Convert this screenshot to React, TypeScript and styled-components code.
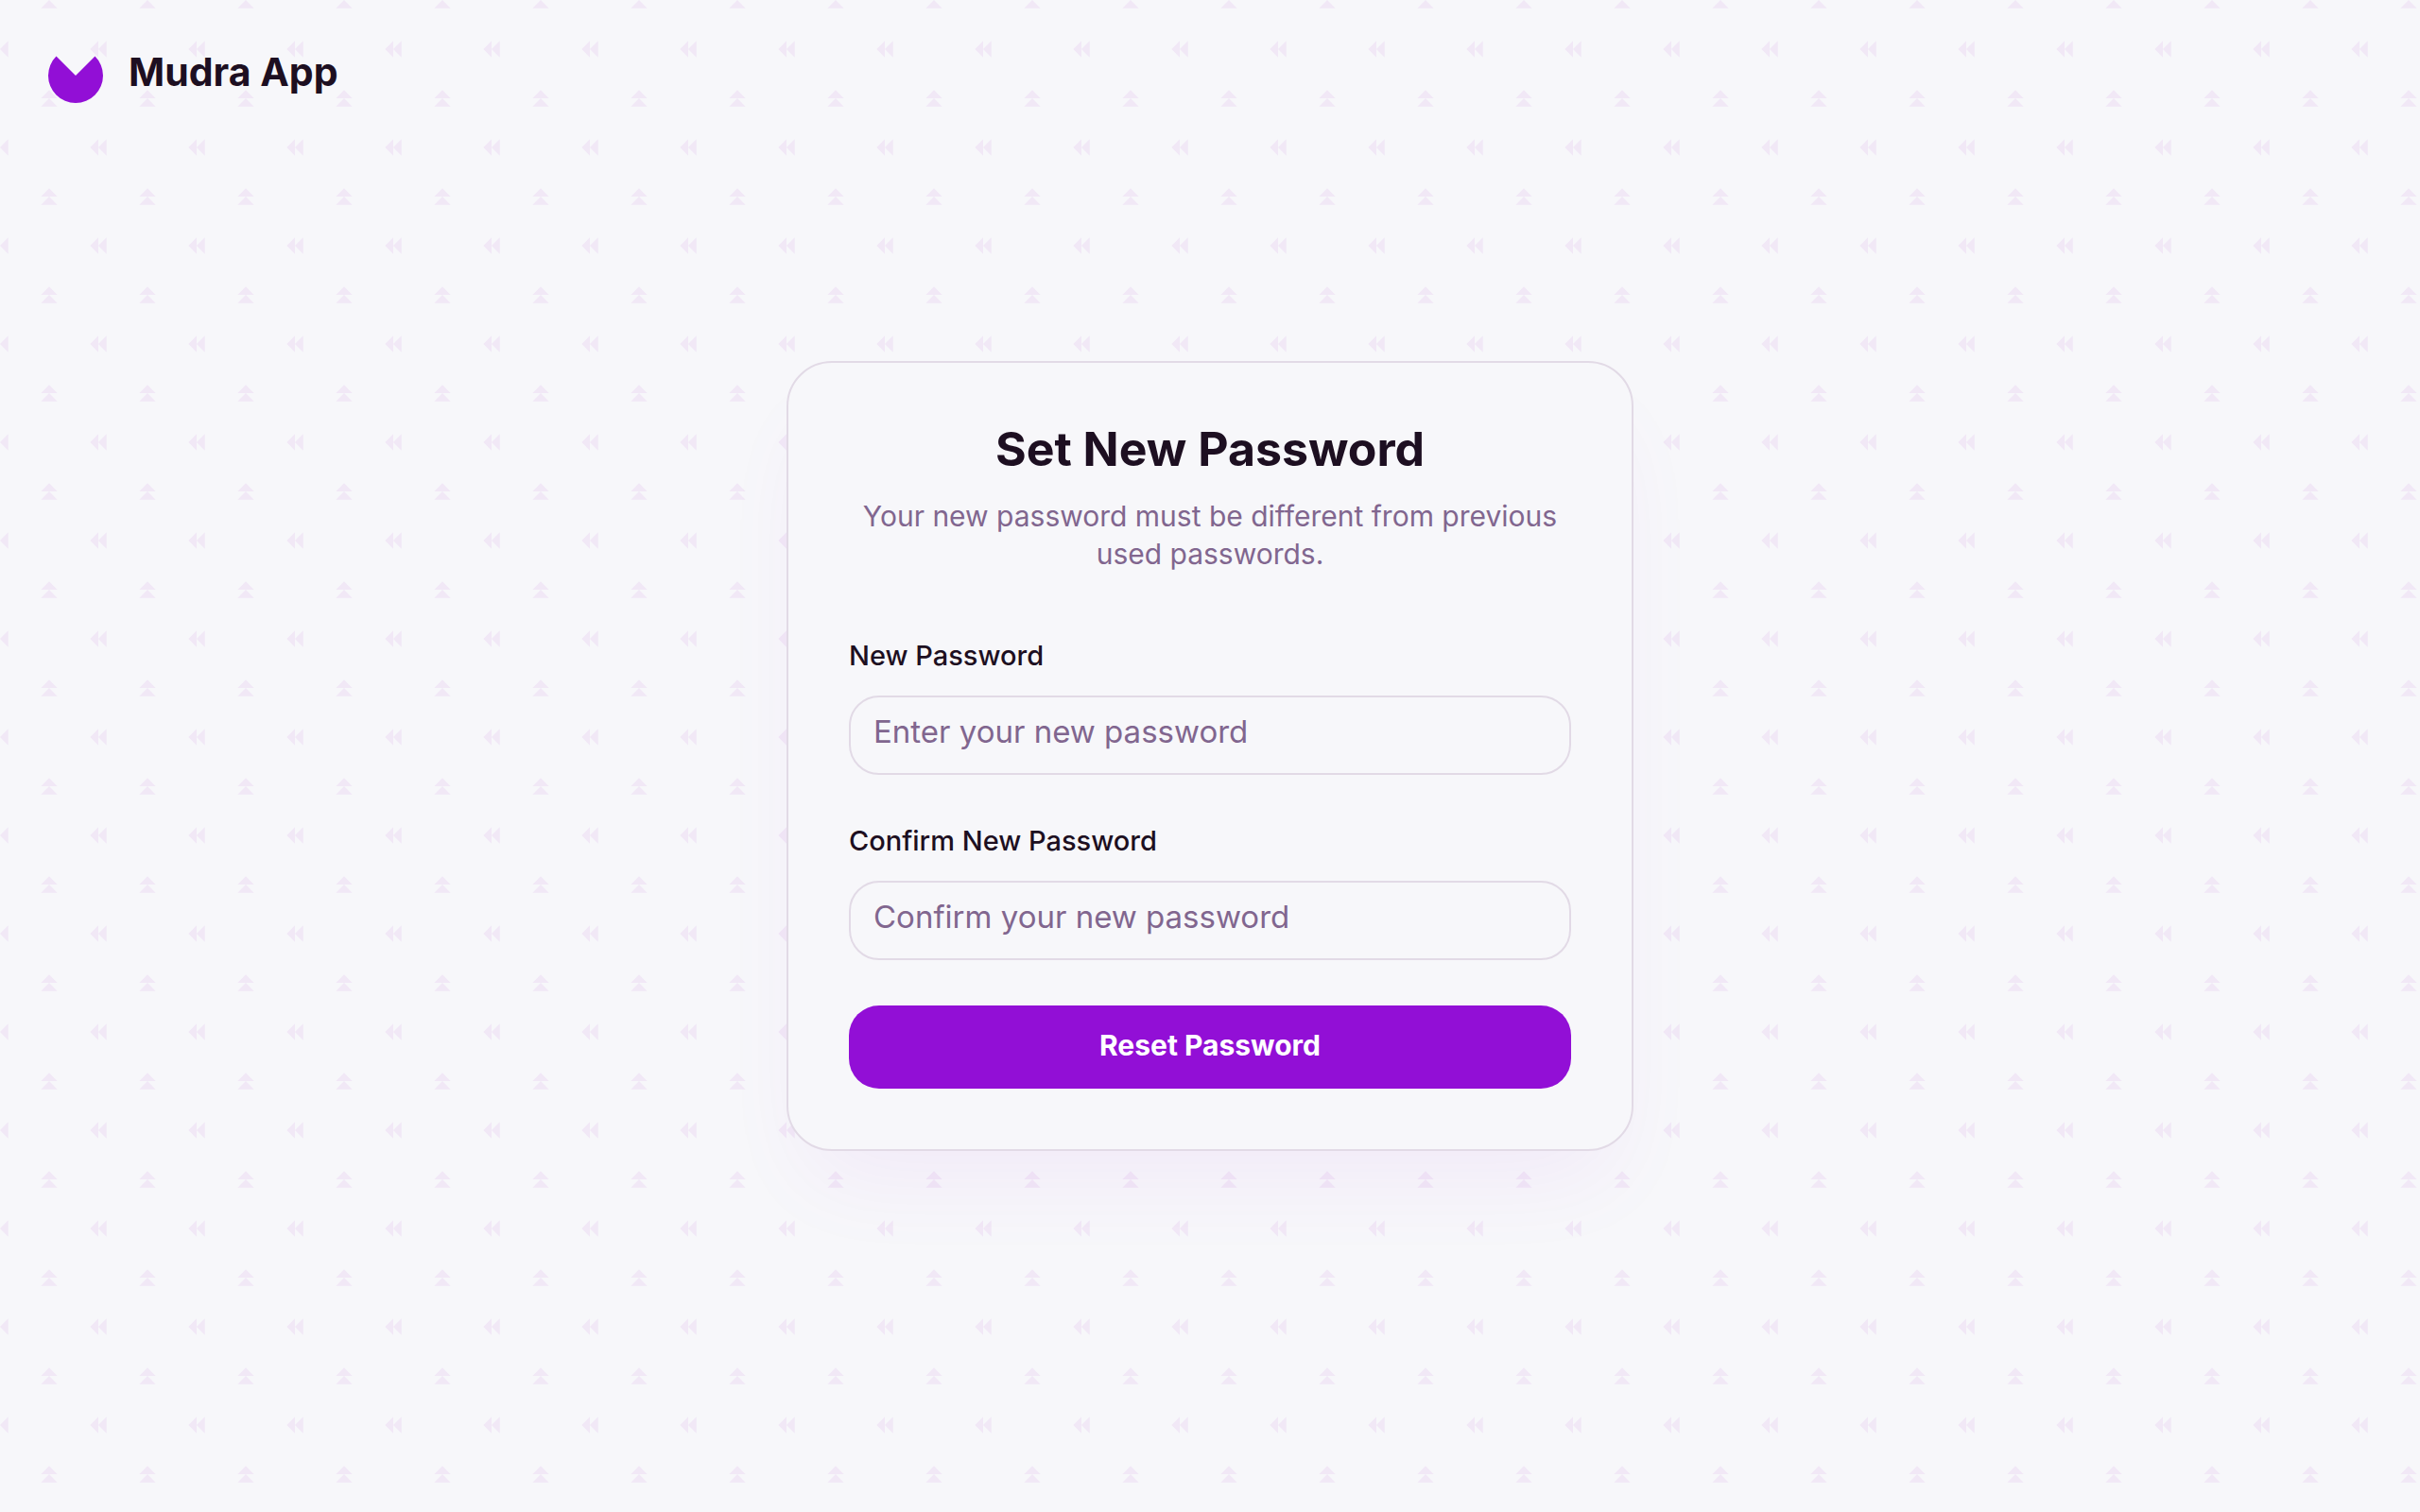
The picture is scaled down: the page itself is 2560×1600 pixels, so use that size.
import React from "react";
import styled, { createGlobalStyle } from "styled-components";

const color = {
  page: "#f7f7fa",
  ink: "#1d0f21",
  muted: "#81668f",
  line: "#e2dae6",
  primary: "#920fd6",
  pattern: "#9a10c8",
};

const tile = encodeURIComponent(
  `<svg xmlns="http://www.w3.org/2000/svg" width="104" height="104" viewBox="0 0 12 12"><path fill="${color.pattern}" fill-opacity="0.065" d="M6 0l1 1H5zM6 11l1 1H5zM0 6l1-1v2zM11 6l1-1v2z"/></svg>`
);

const GlobalStyle = createGlobalStyle`
  *, *::before, *::after { box-sizing: border-box; }
  body {
    margin: 0;
    background: ${color.page};
    color: ${color.ink};
    font-family: Inter, "Liberation Sans", sans-serif;
  }
`;

const Page = styled.div`
  min-height: 100vh;
  display: grid;
  grid-template-rows: 1fr auto 1fr;
  background-image: url("data:image/svg+xml,${tile}");
  background-size: 104px 104px;
`;

const Header = styled.header`
  padding: 48px;
`;

const Brand = styled.a`
  display: inline-flex;
  align-items: flex-start;
  gap: 24px;
  color: inherit;
  text-decoration: none;
`;

const BrandMark = styled.svg`
  width: 64px;
  height: 64px;
  fill: ${color.primary};
`;

const BrandName = styled.span`
  font-size: 41px;
  line-height: 56px;
  font-weight: 700;
`;

const Main = styled.main`
  display: flex;
  justify-content: center;
`;

const Card = styled.section`
  width: 100%;
  max-width: 896px;
  padding: 64px;
  border: 2px solid ${color.line};
  border-radius: 48px;
  background: ${color.page};
  box-shadow: 0 50px 100px -24px rgba(146, 15, 214, 0.06);
`;

const Intro = styled.div`
  display: flex;
  flex-direction: column;
  gap: 24px;
  margin-bottom: 66px;
  text-align: center;
`;

const Title = styled.h1`
  margin: 0;
  font-size: 50px;
  line-height: 54px;
  font-weight: 700;
`;

const Description = styled.p`
  margin: 0;
  color: ${color.muted};
  font-size: 30px;
  line-height: 40px;
`;

const Form = styled.form`
  display: flex;
  flex-direction: column;
  gap: 48px;
`;

const Field = styled.div`
  display: flex;
  flex-direction: column;
  gap: 20px;
`;

const Label = styled.label`
  font-size: 29px;
  line-height: 44px;
  font-weight: 500;
`;

const Input = styled.input`
  width: 100%;
  height: 84px;
  padding: 0 24px 8px;
  border: 2px solid ${color.line};
  border-radius: 32px;
  background: transparent;
  color: ${color.ink};
  font-family: inherit;
  font-size: 33px;

  &::placeholder {
    color: ${color.muted};
    opacity: 1;
  }
`;

const Button = styled.button`
  width: 100%;
  height: 88px;
  padding: 0 32px 4px;
  border: 0;
  border-radius: 32px;
  background: ${color.primary};
  color: #fff;
  font-family: inherit;
  font-size: 30px;
  font-weight: 700;
  cursor: pointer;
`;

type PasswordFieldProps = { id: string; label: string; placeholder: string };

function PasswordField({ id, label, placeholder }: PasswordFieldProps) {
  return (
    <Field>
      <Label htmlFor={id}>{label}</Label>
      <Input id={id} type="password" placeholder={placeholder} autoComplete="new-password" />
    </Field>
  );
}

export default function App() {
  return (
    <>
      <GlobalStyle />
      <Page>
        <Header>
          <Brand href="#">
            <BrandMark viewBox="0 0 64 64" aria-hidden="true">
              <path d="M32 32L11.5 11.5A29 29 0 1 0 52.5 11.5Z" />
            </BrandMark>
            <BrandName>Mudra App</BrandName>
          </Brand>
        </Header>
        <Main>
          <Card>
            <Intro>
              <Title>Set New Password</Title>
              <Description>Your new password must be different from previous used passwords.</Description>
            </Intro>
            <Form onSubmit={(event) => event.preventDefault()}>
              <PasswordField id="new-password" label="New Password" placeholder="Enter your new password" />
              <PasswordField
                id="confirm-password"
                label="Confirm New Password"
                placeholder="Confirm your new password"
              />
              <Button type="submit">Reset Password</Button>
            </Form>
          </Card>
        </Main>
      </Page>
    </>
  );
}
